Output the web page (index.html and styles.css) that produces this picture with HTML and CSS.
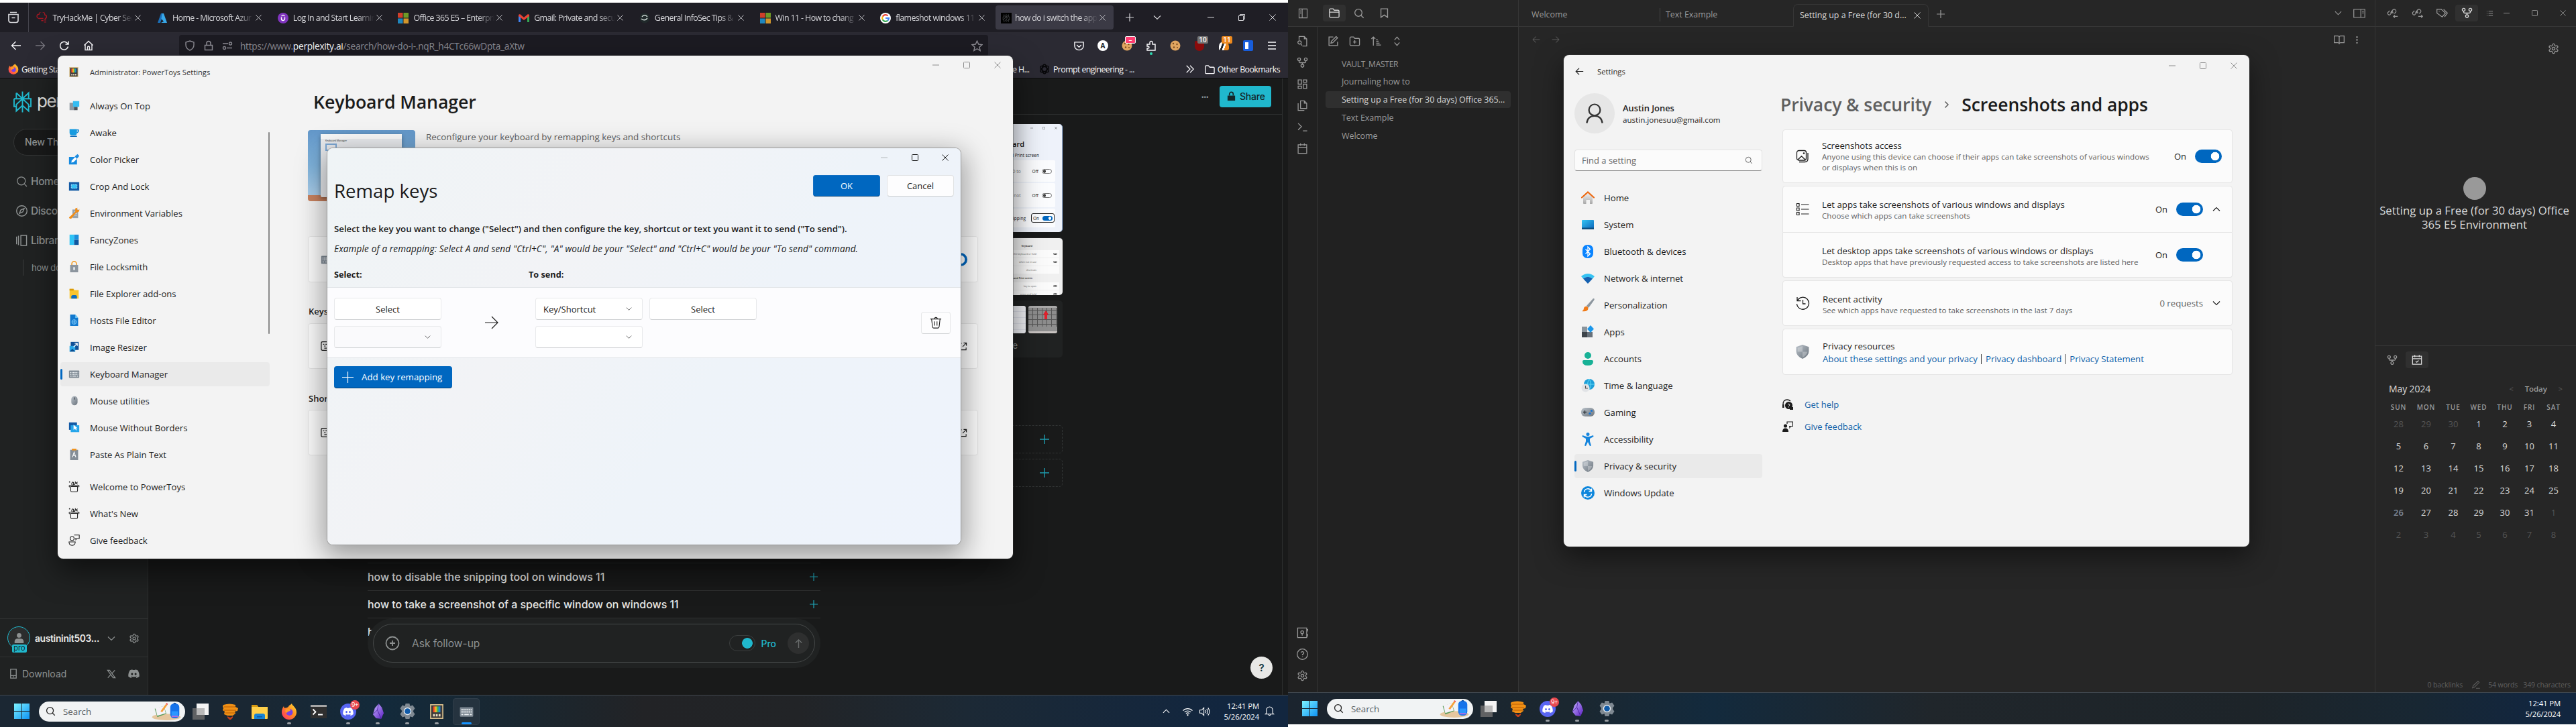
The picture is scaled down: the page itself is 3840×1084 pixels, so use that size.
FILE: index.html
```html
<!DOCTYPE html>
<html lang="en">
<head>
<meta charset="utf-8">
<title>Desktop</title>
<link rel="stylesheet" href="styles.css">
</head>
<body>
<svg class="defs" width="0" height="0" aria-hidden="true">
  <defs>
    <linearGradient id="g-win" x1="0" y1="0" x2="1" y2="1"><stop offset="0" stop-color="#7df3ff"/><stop offset="1" stop-color="#0f93f5"/></linearGradient>
    <linearGradient id="g-blue" x1="0" y1="0" x2="1" y2="1"><stop offset="0" stop-color="#33c5f5"/><stop offset="1" stop-color="#0a63b8"/></linearGradient>
    <linearGradient id="g-gray" x1="0" y1="0" x2="1" y2="1"><stop offset="0" stop-color="#b9c1c9"/><stop offset="1" stop-color="#6b747d"/></linearGradient>
    <linearGradient id="g-ff" x1="0" y1="1" x2="1" y2="0"><stop offset="0" stop-color="#ff2a6d"/><stop offset=".55" stop-color="#ff8a1f"/><stop offset="1" stop-color="#ffe43c"/></linearGradient>
    <linearGradient id="g-obs" x1="0" y1="0" x2="1" y2="1"><stop offset="0" stop-color="#c9b6ff"/><stop offset="1" stop-color="#5b1fc4"/></linearGradient>
    <linearGradient id="g-home" x1="0" y1="0" x2="0" y2="1"><stop offset="0" stop-color="#f0f0f0"/><stop offset="1" stop-color="#a9a9a9"/></linearGradient>
    <linearGradient id="g-rain" x1="0" y1="0" x2="1" y2="0"><stop offset=".1" stop-color="#e8412d"/><stop offset=".4" stop-color="#fbc423"/><stop offset=".6" stop-color="#3fb54a"/><stop offset=".9" stop-color="#1e7fe0"/></linearGradient>
  </defs>
  <symbol id="min" viewBox="0 0 10 10"><path d="M0 5h10" fill="none" stroke="currentColor"/></symbol>
  <symbol id="max" viewBox="0 0 10 10"><rect x=".5" y=".5" width="9" height="9" rx="1" fill="none" stroke="currentColor"/></symbol>
  <symbol id="restore" viewBox="0 0 10 10"><path d="M.5 2.5h7v7h-7zM2.5 2.5v-2h7v7h-2" fill="none" stroke="currentColor"/></symbol>
  <symbol id="x" viewBox="0 0 10 10"><path d="M.5.5l9 9M9.5.5l-9 9" fill="none" stroke="currentColor"/></symbol>
  <symbol id="plus" viewBox="0 0 10 10"><path d="M5 0v10M0 5h10" fill="none" stroke="currentColor"/></symbol>
  <symbol id="plusthin" viewBox="0 0 17 17"><path d="M8.500 0v17M0 8.500h17" fill="none" stroke="currentColor" stroke-width="1.200"/></symbol>
  <symbol id="down" viewBox="0 0 12 12"><path d="M1 3.500l5 5 5-5" fill="none" stroke="currentColor" stroke-width="1.200"/></symbol>
  <symbol id="up" viewBox="0 0 12 12"><path d="M1 8.500l5-5 5 5" fill="none" stroke="currentColor" stroke-width="1.200"/></symbol>
  <symbol id="left" viewBox="0 0 16 16"><path d="M15 8H1.500M7.500 2l-6 6 6 6" fill="none" stroke="currentColor" stroke-width="1.400"/></symbol>
  <symbol id="right" viewBox="0 0 16 16"><path d="M1 8h13.500M8.500 2l6 6-6 6" fill="none" stroke="currentColor" stroke-width="1.400"/></symbol>
  <symbol id="mapto" viewBox="0 0 20 20"><path d="M0 10h19M10 1l9 9-9 9" fill="none" stroke="currentColor" stroke-width="1.200"/></symbol>
  <symbol id="reload" viewBox="0 0 16 16"><path d="M13.500 9.500a6 6 0 1 1-1.500-5.500l1.500 1.500M14 1.500v4.500H9.500" fill="none" stroke="currentColor" stroke-width="1.500"/></symbol>
  <symbol id="house" viewBox="0 0 16 16"><path d="M1.500 7.500L8 1.500l6.500 6M3 6.500v8h10v-8M6.500 14.500v-4a1.500 1.500 0 0 1 3 0v4" fill="none" stroke="currentColor" stroke-width="1.400"/></symbol>
  <symbol id="fxview" viewBox="0 0 18 18"><path d="M4 1.500h10M2 4.500h14v9a3 3 0 0 1-3 3H5a3 3 0 0 1-3-3zM6.500 9.500h5" fill="none" stroke="currentColor" stroke-width="1.700"/></symbol>
  <symbol id="shieldo" viewBox="0 0 16 16"><path d="M8 1l6 2v4c0 4-2.500 6.500-6 8-3.500-1.500-6-4-6-8V3z" fill="none" stroke="currentColor" stroke-width="1.400"/></symbol>
  <symbol id="lock" viewBox="0 0 16 16"><path d="M2.500 7.500h11v7h-11zM5 7.500V4.500a3 3 0 0 1 6 0v3" fill="none" stroke="currentColor" stroke-width="1.500"/></symbol>
  <symbol id="lockf" viewBox="0 0 16 16"><path d="M2 7h12v8H2z" fill="currentColor"/><path d="M5 7V4.500a3 3 0 0 1 6 0V7" fill="none" stroke="currentColor" stroke-width="1.800"/></symbol>
  <symbol id="perm" viewBox="0 0 16 16"><path d="M1 5h8M7 11.500h8" stroke="currentColor" stroke-width="1.500"/><circle cx="12.500" cy="5" r="2" fill="none" stroke="currentColor" stroke-width="1.400"/><circle cx="3.500" cy="11.500" r="2" fill="none" stroke="currentColor" stroke-width="1.400"/></symbol>
  <symbol id="star" viewBox="0 0 16 16"><path d="M8 1l2.100 4.700 5 .5-3.800 3.400 1.100 5L8 12l-4.400 2.600 1.100-5L.9 6.200l5-.5z" fill="none" stroke="currentColor" stroke-width="1.300"/></symbol>
  <symbol id="pocket" viewBox="0 0 16 16"><path d="M1 2h14v6a7 6.500 0 0 1-14 0zM4.500 6.500L8 10l3.500-3.500" fill="none" stroke="currentColor" stroke-width="1.500"/></symbol>
  <symbol id="puzzle" viewBox="0 0 16 16"><path d="M2 6h4V3.500a2 2 0 0 1 4 0V6h4v9H2v-3h1.500a1.500 1.500 0 0 0 0-3H2z" fill="none" stroke="currentColor" stroke-width="1.400"/></symbol>
  <symbol id="cookie" viewBox="0 0 16 16"><circle cx="8" cy="8" r="7.500" fill="#e0a560"/><g fill="#7a4a1e"><circle cx="5" cy="5" r="1.200"/><circle cx="10.500" cy="6" r="1.200"/><circle cx="6" cy="10.500" r="1.200"/><circle cx="11" cy="11" r="1"/></g></symbol>
  <symbol id="menu" viewBox="0 0 16 16"><path d="M2 3h12M2 8h12M2 13h12" stroke="currentColor" stroke-width="1.600"/></symbol>
  <symbol id="fox" viewBox="0 0 24 24"><path d="M12 3c2-1 3-2 4-3 0 3 7 5 7 13a11 11 0 0 1-22 0c0-4 1-6 3-9l1 3c2-1 5 0 7-4z" fill="url(#g-ff)"/><circle cx="12.500" cy="13" r="5" fill="#7542e5"/><path d="M8 8c3-1 6 0 6 2s-5 1-5 4c-3-1-4-4-1-6z" fill="#ff9a26"/></symbol>
  <symbol id="folder" viewBox="0 0 16 16"><path d="M1 13.500V3q0-1 1-1h3.500L8 4.500h6q1 0 1 1v8q0 1-1 1H2q-1 0-1-1z" fill="none" stroke="currentColor" stroke-width="1.400"/></symbol>
  <symbol id="chev2" viewBox="0 0 16 16"><path d="M2 2l6 6-6 6M8 2l6 6-6 6" fill="none" stroke="currentColor" stroke-width="1.400"/></symbol>
  <symbol id="cloud" viewBox="0 0 16 16"><path d="M4 9a3 3 0 0 1 0-6 4 4 0 0 1 8 1 2.500 2.500 0 0 1 0 5M4 9h6M7 12h3M11 14h3M11 11h3" fill="none" stroke="#a31722" stroke-width="1.300"/></symbol>
  <symbol id="azure" viewBox="0 0 16 16"><path d="M6 1h4l-5 14H1z" fill="#1b6fb8"/><path d="M8 1h2l5 14H6l4-2-3.500-4z" fill="#38a9ea"/></symbol>
  <symbol id="udemy" viewBox="0 0 16 16"><circle cx="8" cy="8" r="8" fill="#8034be"/><path d="M5.500 6.500V9a2.500 2.500 0 0 0 5 0V6.500M5.500 5L8 3.500 10.500 5" fill="none" stroke="#fff" stroke-width="1.400"/></symbol>
  <symbol id="ms" viewBox="0 0 16 16"><path d="M0 0h7.500v7.500H0z" fill="#cf3f2b"/><path d="M8.500 0H16v7.500H8.500z" fill="#6f9a26"/><path d="M0 8.500h7.500V16H0z" fill="#1f86bd"/><path d="M8.500 8.500H16V16H8.500z" fill="#d1962c"/></symbol>
  <symbol id="gmail" viewBox="0 0 16 16"><path d="M0 4v10h3V6z" fill="#4285f4"/><path d="M16 4v10h-3V6z" fill="#34a853"/><path d="M0 3l2-1 6 5 6-5 2 1v2l-8 6-8-6z" fill="#ea4335"/></symbol>
  <symbol id="google" viewBox="0 0 16 16"><circle cx="8" cy="8" r="8" fill="#fff"/><g fill="none" stroke-width="2.200"><path d="M11.500 4.500A5 5 0 0 0 3.700 5.700" stroke="#ea4335"/><path d="M3.700 5.700a5 5 0 0 0 0 4.600" stroke="#fbbc05"/><path d="M3.700 10.300a5 5 0 0 0 7.600 1.400" stroke="#34a853"/><path d="M11.300 11.700A5 5 0 0 0 13 8H8" stroke="#4285f4"/></g></symbol>
  <symbol id="infosec" viewBox="0 0 16 16"><circle cx="8" cy="8" r="7.500" fill="#20292a"/><path d="M4 6c2-3 6-3 8 0M3 9c3 3 7 2 9-1" fill="none" stroke="#c9d4d0" stroke-width="1.500"/></symbol>
  <symbol id="plex" viewBox="0 0 28 32"><path d="M14 0v32M4.500 2L14 11l9.500-9v9M4.500 2v9M1 11h26v12h-4M1 11v12h4M14 11L4.500 20v10l9.500-8.500 9.500 8.500V20z" fill="none" stroke="currentColor" stroke-width="2"/></symbol>
  <symbol id="openai" viewBox="0 0 16 16"><g fill="none" stroke="#08080a" stroke-width="1.500"><ellipse cx="8" cy="8" rx="3.500" ry="7"/><ellipse cx="8" cy="8" rx="3.500" ry="7" transform="rotate(60 8 8)"/><ellipse cx="8" cy="8" rx="3.500" ry="7" transform="rotate(120 8 8)"/></g></symbol>
  <!-- line icons on a 24px grid -->
  <symbol id="search" viewBox="0 0 24 24"><g fill="none" stroke="currentColor" stroke-width="2"><circle cx="10.500" cy="10.500" r="8"/><path d="M22 22l-6-6"/></g></symbol>
  <symbol id="searchr" viewBox="0 0 24 24"><g fill="none" stroke="currentColor" stroke-width="1.800"><circle cx="11" cy="11" r="8.500"/><path d="M17.500 17.500l5 5"/></g></symbol>
  <symbol id="compass" viewBox="0 0 24 24"><g fill="none" stroke="currentColor" stroke-width="2"><circle cx="12" cy="12" r="11"/><path d="M17 7l-3 7-7 3 3-7z"/></g></symbol>
  <symbol id="library" viewBox="0 0 24 24"><path d="M1 4v16M5 2v20M10 1.500h12v21H10z" fill="none" stroke="currentColor" stroke-width="2"/></symbol>
  <symbol id="gear" viewBox="0 0 24 24"><g fill="none" stroke="currentColor" stroke-width="1.800"><path d="M12.220 2h-.44a2 2 0 0 0-2 2v.18a2 2 0 0 1-1 1.730l-.43.25a2 2 0 0 1-2 0l-.15-.08a2 2 0 0 0-2.730.730l-.22.38a2 2 0 0 0 .73 2.730l.15.1a2 2 0 0 1 1 1.720v.51a2 2 0 0 1-1 1.740l-.15.09a2 2 0 0 0-.73 2.730l.22.38a2 2 0 0 0 2.730.730l.15-.08a2 2 0 0 1 2 0l.43.25a2 2 0 0 1 1 1.730V20a2 2 0 0 0 2 2h.44a2 2 0 0 0 2-2v-.18a2 2 0 0 1 1-1.730l.43-.25a2 2 0 0 1 2 0l.15.08a2 2 0 0 0 2.730-.730l.22-.39a2 2 0 0 0-.73-2.730l-.15-.08a2 2 0 0 1-1-1.740v-.5a2 2 0 0 1 1-1.740l.15-.09a2 2 0 0 0 .73-2.730l-.22-.38a2 2 0 0 0-2.730-.730l-.15.08a2 2 0 0 1-2 0l-.43-.25a2 2 0 0 1-1-1.730V4a2 2 0 0 0-2-2z"/><circle cx="12" cy="12" r="3"/></g></symbol>
  <symbol id="phone" viewBox="0 0 12 16"><path d="M1.500 1h9v14h-9zM2 11h8M5 13h2" fill="none" stroke="currentColor" stroke-width="1.400"/></symbol>
  <symbol id="xlogo" viewBox="0 0 16 16"><path d="M1.500 1.500h3.500l9.500 13H11zM14 1.500L9 7M2 14.500L7 9" fill="none" stroke="currentColor" stroke-width="1.400"/></symbol>
  <symbol id="discord" viewBox="0 0 24 18"><path d="M20 1.500A20 20 0 0 0 15.200 0l-.7 1.300a18 18 0 0 0-5 0L8.800 0A20 20 0 0 0 4 1.500C1 6 0 10.500.5 15A20 20 0 0 0 6.500 18l1.300-2-2-1 .5-.4a14 14 0 0 0 11.400 0l.5.4-2 1 1.300 2a20 20 0 0 0 6-3c.6-5.200-.9-9.600-3.500-13.500zM8.300 12.200c-1.200 0-2.100-1.100-2.100-2.400s.9-2.400 2.100-2.400 2.100 1.100 2.100 2.400-.9 2.400-2.100 2.400zm7.400 0c-1.200 0-2.100-1.100-2.100-2.400s.9-2.400 2.100-2.400 2.100 1.100 2.100 2.400-.9 2.400-2.100 2.400z" fill="currentColor"/></symbol>
  <symbol id="circplus" viewBox="0 0 22 22"><g fill="none" stroke="currentColor" stroke-width="1.800"><circle cx="11" cy="11" r="9.500"/><path d="M11 7v8M7 11h8"/></g></symbol>
  <symbol id="arrowup" viewBox="0 0 16 16"><path d="M8 15V2M3 7l5-5 5 5" fill="none" stroke="currentColor" stroke-width="1.500"/></symbol>
  <symbol id="person" viewBox="0 0 20 22"><circle cx="10" cy="5.500" r="4.500" fill="currentColor"/><path d="M1 21v-3q0-6 6-6h6q6 0 6 6v3z" fill="currentColor"/></symbol>
  <!-- PowerToys -->
  <symbol id="pt" viewBox="0 0 20 20"><path d="M1 0h18v20H1z" fill="#d9c08e"/><path d="M2.500 1.500h15v17h-15z" fill="#3b3a39"/><path d="M5 3h10v8H5z" fill="url(#g-rain)"/><path d="M5 13.500h2.500v3H5zM8.800 13.500h2.500v3H8.800zM12.600 13.500h2.500v3h-2.500z" fill="#e9dcc0"/></symbol>
  <symbol id="aot" viewBox="0 0 20 20"><path d="M2 5h9v13H2z" fill="#8f98a1"/><path d="M10 12h6v6h-6z" fill="#4b5157"/><path d="M8 2h11v10H8z" fill="#35bdf3"/></symbol>
  <symbol id="cup" viewBox="0 0 20 20"><path d="M2 4h13v6q0 5-4 5H6q-4 0-4-5z" fill="#179be0"/><path d="M15 5.500h2.500q1.200 3-2.500 5" fill="none" stroke="#1286cf" stroke-width="1.700"/><path d="M3 16h12v1.500H3z" fill="#0b67b3"/></symbol>
  <symbol id="picker" viewBox="0 0 20 20"><path d="M1 6h14v13H1z" fill="#158ae0"/><path d="M5 16l1-4 6-6 3 3-6 6z" fill="#fff"/><path d="M11 5l5-4 3 3-4 5z" fill="#1d8be0"/></symbol>
  <symbol id="crop" viewBox="0 0 20 20"><path d="M1 3h18v15H1z" fill="#135aa5"/><path d="M5 7h10v7H5z" fill="#35c2f5" stroke="#bfe9ff" stroke-dasharray="2 1.500"/></symbol>
  <symbol id="wrench" viewBox="0 0 20 20"><path d="M7 4h10v15H7z" fill="#98a2ab"/><path d="M10 8h5M10 11h5M10 14h5" stroke="#dfe4e8"/><path d="M12 2l4-1-1 3 3 1 1-2q1 6-5 6l-9 11q-3 1-4-2L12 8z" fill="#f08c16"/></symbol>
  <symbol id="zones" viewBox="0 0 20 20"><path d="M2 1h8v18H2z" fill="#2fc4f6"/><path d="M10 1h8v9h-8z" fill="#1a8fdc"/><path d="M10 10h8v9h-8z" fill="#0e569f"/></symbol>
  <symbol id="locksmith" viewBox="0 0 20 20"><path d="M6 8V5a4 4 0 0 1 8 0v2" fill="none" stroke="#f39a1f" stroke-width="1.800"/><path d="M3 7h14v13H3z" fill="#8c959e"/><path d="M8.500 11h3v5h-3z" fill="#e9edf0"/></symbol>
  <symbol id="fexp" viewBox="0 0 20 20"><path d="M2 2h7l1.500 2H18v15H2z" fill="#fbc52d"/><path d="M2 2h7v3H2z" fill="#d99a0b"/><path d="M5 19v-3q0-3 3-3h4q3 0 3 3v3z" fill="#0f6cbd"/></symbol>
  <symbol id="hosts" viewBox="0 0 20 20"><path d="M3 0h9l5 6v14H3z" fill="#1279cf"/><path d="M12 0l5 6h-5z" fill="#6cc6f5"/><circle cx="10" cy="13" r="4" fill="none" stroke="#8fd6ff"/><path d="M6 13h8M10 9v8" stroke="#8fd6ff"/></symbol>
  <symbol id="resize" viewBox="0 0 20 20"><path d="M4 1h14v14H4z" fill="#0f4f96"/><path d="M2 8h10v10H2z" fill="#29a7e8"/><path d="M2 18l5-5 5 5z" fill="#0c4c8f"/><path d="M9 10l6-6M11 3.500h4.500V8" stroke="#fff" stroke-width="1.500" fill="none"/></symbol>
  <symbol id="kbd" viewBox="0 0 20 20"><rect x="1" y="4" width="18" height="13" rx="1" fill="#7e8993"/><path d="M3 7.500h14M3 10.500h14" stroke="#eef2f5" stroke-width="1.700" stroke-dasharray="1.800 .8"/><path d="M3 14h2.500M7 14h6M14.500 14H17" stroke="#eef2f5" stroke-width="1.500"/></symbol>
  <symbol id="mouse" viewBox="0 0 20 20"><rect x="5" y="2" width="11" height="16" rx="5.500" fill="url(#g-gray)"/><path d="M10.500 4v4" stroke="#444b52" stroke-width="1.500"/></symbol>
  <symbol id="mwb" viewBox="0 0 20 20"><path d="M1 1h14v13H1z" fill="#135aa5"/><path d="M4 6h15v12H4z" fill="#25a5ea"/><path d="M9 5v9l2.500-2 2 3 1-.8-1.500-3h3z" fill="#fff"/></symbol>
  <symbol id="paste" viewBox="0 0 20 20"><path d="M3 2h14v18H3z" fill="#858e97"/><path d="M6 0h8v3H6z" fill="#f0931e"/><path d="M7 15l3-9 3 9M8 12h4" fill="none" stroke="#fff" stroke-width="1.200"/></symbol>
  <symbol id="party" viewBox="0 0 20 20"><path d="M4 10v7q0 2 2 2h8q2 0 2-2v-7zM2 11q-2-3 1-3h14q3 0 1 3M8 8q-3-1-2-4t3-1v4q4-1 3-6M13 3l3 3M16 2l-3 3M2 1v2M1 2h2M18 8v2" fill="none" stroke="currentColor" stroke-width="1.200"/></symbol>
  <symbol id="feedback" viewBox="0 0 20 20"><circle cx="6.500" cy="7" r="3.500" fill="none" stroke="currentColor" stroke-width="1.200"/><path d="M1 13h11q0 6-5.500 6T1 13zM10 1h9v6h-4l-2 2V7h-1.500" fill="none" stroke="currentColor" stroke-width="1.200"/></symbol>
  <symbol id="keyo" viewBox="0 0 20 20"><rect x="1" y="3" width="18" height="14" rx="2" fill="none" stroke="currentColor" stroke-width="1.400"/><path d="M4 7h2M8 7h2M12 7h2M6 10h2M10 10h2M14 10h2M6 13.500h8" stroke="currentColor" stroke-width="1.500"/></symbol>
  <symbol id="ext" viewBox="0 0 14 14"><path d="M5 2H1.500v10.500H12V9M8 1.500h4.500V6M12.500 1.500l-6 6" fill="none" stroke="currentColor" stroke-width="1.200"/></symbol>
  <symbol id="trash" viewBox="0 0 20 20"><path d="M1 4h18M3 4l1.500 13q.2 2 2 2h7q1.800 0 2-2L17 4M7.500 4a2.500 2.500 0 0 1 5 0M8 8v7M12 8v7" fill="none" stroke="currentColor" stroke-width="1.200"/></symbol>
  <!-- taskbar -->
  <symbol id="winlogo" viewBox="0 0 24 24"><path d="M0 0h11.500v11.500H0zM12.500 0H24v11.500H12.500zM0 12.500h11.500V24H0zM12.500 12.500H24V24H12.500z" fill="url(#g-win)"/></symbol>
  <symbol id="art" viewBox="0 0 46 28"><ellipse cx="23" cy="23" rx="22" ry="5" fill="#e5c69e"/><path d="M5 10l14-4 4 12-14 5z" fill="#5a9c5a"/><path d="M6 9l13-3 3 11-13 4z" fill="#f5f2f7"/><path d="M14 14l8-11 2.500 1.500-8 11z" fill="#f6a13a"/><path d="M22 3l1-2 2.500 1.500-1 2z" fill="#ef5a5a"/><rect x="29" y="2" width="14" height="23" rx="6" fill="#1673ea"/><path d="M31 14h10v8H31z" fill="#2b97ff"/><path d="M31 22h10" stroke="#b46ae0" stroke-width="2"/><path d="M34 3q2-3 4 0" stroke="#0a4ea8" fill="none" stroke-width="1.500"/></symbol>
  <symbol id="taskview" viewBox="0 0 24 24"><path d="M6 0h18v17H6z" fill="#f4f4f4"/><path d="M0 7h18v17H0z" fill="#6c6c6c" opacity=".85"/><path d="M6 7h12v10H6z" fill="#b9b9b9"/></symbol>
  <symbol id="swirl" viewBox="0 0 24 24"><path d="M2 2q9-3 18 0v3l4 2-1 4-4 1 1 3-4 3H8l-5-2 1-4-3-2 1-3-1-3z" fill="#f09015"/><path d="M3 5h17M3 10h18M5 14h14" stroke="#b65a05" stroke-width="1.200"/><path d="M8 19l4 2 4-2v2l-4 4-4-4z" fill="#c7401a"/></symbol>
  <symbol id="explorer" viewBox="0 0 24 24"><path d="M0 2h8l2 3h14v17q0 1-1 1H1q-1 0-1-1z" fill="#ffd04a"/><path d="M0 2h8l2 3H0z" fill="#d79a12"/><path d="M4 23v-5q0-3 3-3h10q3 0 3 3v5z" fill="#1583d6"/><path d="M8 19h8v1.500H8z" fill="#0b5aa5"/></symbol>
  <symbol id="term" viewBox="0 0 24 20"><path d="M0 0h24v20H0z" fill="#2f2f2f"/><path d="M0 0h24v3H0z" fill="#a5a5a5"/><path d="M3.500 6.500l4 4-4 4M11 14.500h7" fill="none" stroke="#fff" stroke-width="1.800"/></symbol>
  <symbol id="obs" viewBox="0 0 18 24"><path d="M10 0L4 7 1 17l5 6 8 1 4-9-3-9z" fill="url(#g-obs)"/><path d="M10 0L8 10l6 14M8 10l-7 7" stroke="#3f1a94" stroke-width=".8" fill="none"/></symbol>
  <symbol id="cog" viewBox="0 0 24 24"><path d="M9 0h6l1 4 4-1.500 3.500 5L21 11v2l2.500 3.500-3.500 5L16 20l-1 4H9l-1-4-4 1.500-3.500-5L3 13v-2L.5 7.500 4 2.500 8 4z" fill="#7f8992"/><circle cx="12" cy="12" r="6" fill="#e6ebef"/><circle cx="12" cy="12" r="4.500" fill="#0f5aa8"/></symbol>
  <symbol id="wifi" viewBox="0 0 18 16"><g fill="none" stroke="currentColor" stroke-width="1.300"><path d="M1 6.500a11 11 0 0 1 16 0M3.500 9a8 8 0 0 1 11 0M6 11.500a4.500 4.500 0 0 1 6 0"/></g><circle cx="9" cy="14" r="1.300" fill="currentColor"/></symbol>
  <symbol id="vol" viewBox="0 0 18 16"><path d="M1 5.500h3l4-4v13l-4-4H1zM10.500 5.500q2 2.500 0 5M12.700 3.500q3.500 4.500 0 9M15 1.500q5 6.500 0 13" fill="none" stroke="currentColor" stroke-width="1.200"/></symbol>
  <symbol id="bell" viewBox="0 0 16 16"><path d="M3 11V6a5 5 0 0 1 10 0v5l1.500 1.500h-13zM6.500 13a1.500 1.500 0 0 0 3 0" fill="none" stroke="currentColor" stroke-width="1.200"/></symbol>
  <!-- Obsidian -->
  <symbol id="panel" viewBox="0 0 24 24"><path d="M3 2h18v20H3zM10 2v20M5.500 6H8M5.500 9H8M5.500 12H8" fill="none" stroke="currentColor" stroke-width="1.700"/></symbol>
  <symbol id="panelr" viewBox="0 0 24 24"><path d="M1 4h22v16H1zM15 4v16M17.500 8H21M17.500 11H21" fill="none" stroke="currentColor" stroke-width="1.600"/></symbol>
  <symbol id="ofolder" viewBox="0 0 24 24"><path d="M20 21a2 2 0 0 0 2-2V8a2 2 0 0 0-2-2h-8l-2.500-3H4a2 2 0 0 0-2 2v14a2 2 0 0 0 2 2zM2 10h20" fill="none" stroke="currentColor" stroke-width="1.900"/></symbol>
  <symbol id="bookmark" viewBox="0 0 24 24"><path d="M19 21l-7-5-7 5V3h14z" fill="none" stroke="currentColor" stroke-width="1.900"/></symbol>
  <symbol id="switcher" viewBox="0 0 24 24"><path d="M5 9V2h11l5 5v15h-9M16 2v5h5" fill="none" stroke="currentColor" stroke-width="1.800"/><circle cx="6" cy="14.500" r="3.500" fill="none" stroke="currentColor" stroke-width="1.800"/><path d="M8.500 17.500L11 21" stroke="currentColor" stroke-width="1.800"/></symbol>
  <symbol id="fork" viewBox="0 0 24 24"><g fill="none" stroke="currentColor" stroke-width="1.900"><circle cx="12" cy="18.500" r="3"/><circle cx="5" cy="5" r="3"/><circle cx="19" cy="5" r="3"/><path d="M19 8v2q0 2-2 2H7q-2 0-2-2V8M12 12v3"/></g></symbol>
  <symbol id="dash" viewBox="0 0 24 24"><path d="M3 3h7v9H3zM14 3h7v5h-7zM14 12h7v9h-7zM3 16h7v5H3z" fill="none" stroke="currentColor" stroke-width="1.800"/></symbol>
  <symbol id="files" viewBox="0 0 24 24"><path d="M8 2h8l5 5v11H8zM16 2v5h5M3 7v15h13" fill="none" stroke="currentColor" stroke-width="1.800"/></symbol>
  <symbol id="prompt" viewBox="0 0 24 24"><path d="M3 4l7 7-7 7M13 20h9" fill="none" stroke="currentColor" stroke-width="1.800"/></symbol>
  <symbol id="cal" viewBox="0 0 24 24"><path d="M3 4h18v18H3zM3 9.500h18M8 1v5M16 1v5" fill="none" stroke="currentColor" stroke-width="1.800"/></symbol>
  <symbol id="calcheck" viewBox="0 0 24 24"><path d="M2 4h20v18H2zM2 9.500h20M7 1v5M17 1v5M9 15.500l2.500 2 4-4" fill="none" stroke="currentColor" stroke-width="1.900"/></symbol>
  <symbol id="vault" viewBox="0 0 24 24"><path d="M2 2h19v20H2zM21 5h2.500v4M21 16h2.500v4M11.500 14v4" fill="none" stroke="currentColor" stroke-width="1.800"/><circle cx="11.500" cy="11" r="3" fill="none" stroke="currentColor" stroke-width="1.800"/></symbol>
  <symbol id="help" viewBox="0 0 24 24"><g fill="none" stroke="currentColor" stroke-width="1.800"><circle cx="12" cy="12" r="11"/><path d="M9 9q.5-2.500 3-2.500t3 2.500q0 2-3 3.500v1.500M12 16.500v1.500"/></g></symbol>
  <symbol id="edit" viewBox="0 0 24 24"><path d="M12 3H3v18h18v-8M18 2l3 3-10 10-4 1 1-4z" fill="none" stroke="currentColor" stroke-width="1.900"/></symbol>
  <symbol id="newfolder" viewBox="0 0 24 24"><path d="M20 21a2 2 0 0 0 2-2V8a2 2 0 0 0-2-2h-8l-2.500-3H4a2 2 0 0 0-2 2v14a2 2 0 0 0 2 2zM12 10v7M8.500 13.500h7" fill="none" stroke="currentColor" stroke-width="1.900"/></symbol>
  <symbol id="sort" viewBox="0 0 24 24"><path d="M6 21V3M2 7l4-4 4 4M12 8h3M12 12h5M12 16h7M12 20h10" fill="none" stroke="currentColor" stroke-width="1.900"/></symbol>
  <symbol id="updown" viewBox="0 0 24 24"><path d="M6 9l6-7 6 7M6 15l6 7 6-7" fill="none" stroke="currentColor" stroke-width="1.900"/></symbol>
  <symbol id="book" viewBox="0 0 24 24"><path d="M12 6q-1-2-3-2H1v15h8q2 0 3 2 1-2 3-2h8V4h-8q-2 0-3 2v15" fill="none" stroke="currentColor" stroke-width="1.900"/></symbol>
  <symbol id="dots" viewBox="0 0 24 24"><g fill="currentColor"><circle cx="12" cy="4" r="2.200"/><circle cx="12" cy="12" r="2.200"/><circle cx="12" cy="20" r="2.200"/></g></symbol>
  <symbol id="linkin" viewBox="0 0 24 24"><path d="M8 11l5-6a4 4 0 0 1 6 5l-3 3M12 9l-6 7a4 4 0 0 1-4-5l4-4M9 8q4 0 4 5M23 19h-9M17 16l-3 3 3 3" fill="none" stroke="currentColor" stroke-width="1.700"/></symbol>
  <symbol id="linkout" viewBox="0 0 24 24"><path d="M8 11l5-6a4 4 0 0 1 6 5l-3 3M12 9l-6 7a4 4 0 0 1-4-5l4-4M9 8q4 0 4 5M14 19h9M20 16l3 3-3 3" fill="none" stroke="currentColor" stroke-width="1.700"/></symbol>
  <symbol id="tags" viewBox="0 0 24 24"><path d="M1 4h9l9 8-7 8L1 12zM15 4l8 8-6 8M5 8h1.500" fill="none" stroke="currentColor" stroke-width="1.800"/></symbol>
  <symbol id="list" viewBox="0 0 24 24"><path d="M8 5h14M8 12h14M8 19h14M2 5h2M2 12h2M2 19h2" stroke="currentColor" stroke-width="1.900"/></symbol>
  <symbol id="pencil" viewBox="0 0 24 24"><path d="M3 20l2-6L17 3l3 3L8 18zM12 21h10" fill="none" stroke="currentColor" stroke-width="1.800"/></symbol>
  <!-- Settings -->
  <symbol id="s-home" viewBox="0 0 20 20"><path d="M3 8l7-5 7 5v10q0 1-1 1h-3v-6H7.500v6H4q-1 0-1-1z" fill="url(#g-home)"/><path d="M1 9.500l9-8 9 8" fill="none" stroke="#ec6a13" stroke-width="2.200" stroke-linecap="round"/></symbol>
  <symbol id="s-sys" viewBox="0 0 20 20"><rect x="1" y="3" width="18" height="14" rx="1" fill="url(#g-blue)"/><path d="M1 14.500h18V17H1z" fill="#0c4f80"/></symbol>
  <symbol id="s-bt" viewBox="0 0 20 20"><rect x="2" y="0" width="16" height="20" rx="7" fill="#0a84ff"/><path d="M6.500 6.500l7 7L10 17V3l3.500 3.500-7 7" fill="none" stroke="#fff" stroke-width="1.300"/></symbol>
  <symbol id="s-net" viewBox="0 0 20 20"><path d="M0 7Q10-1 20 7l-3 3.500Q10 5 3 10.500z" fill="#35c3f3"/><path d="M3 10.500q7-5.500 14 0L10 18z" fill="#1460b0"/></symbol>
  <symbol id="s-brush" viewBox="0 0 20 20"><path d="M8 11L18 0q3 0 1 3L11 14z" fill="#8d979f"/><path d="M1 19q3-1 3-5 2-3 5-2 3 3 0 6-3 2-8 1z" fill="#f07a17"/></symbol>
  <symbol id="s-apps" viewBox="0 0 20 20"><path d="M1 2h8v8H1z" fill="#8b949c"/><path d="M1 10h8v8H1z" fill="#3d4349"/><path d="M9 10h8v8H9z" fill="#68717a"/><path d="M14 0l5 5.500-5 5.500-5-5.500z" fill="#1b97ea"/></symbol>
  <symbol id="s-acc" viewBox="0 0 20 20"><circle cx="10" cy="5" r="5" fill="#18b196"/><path d="M2 14q0-2 2-2h12q2 0 2 2 0 6-8 6t-8-6z" fill="#18b196"/></symbol>
  <symbol id="s-time" viewBox="0 0 20 20"><circle cx="12" cy="8" r="8" fill="#1e9fd8"/><path d="M4 8h16M12 0q-5 8 0 16 5-8 0-16" fill="none" stroke="#63d8f5"/><circle cx="6.500" cy="13.500" r="6" fill="#e1e3e6"/><path d="M6.500 10v4H10" fill="none" stroke="#555" stroke-width="1.200"/></symbol>
  <symbol id="s-game" viewBox="0 0 20 20"><rect x="0" y="3" width="20" height="13" rx="6" fill="url(#g-gray)"/><path d="M3 9.500h5M5.500 7v5" stroke="#32383e" stroke-width="1.300"/><circle cx="15.500" cy="7.500" r="1.600" fill="#1474d4"/><circle cx="13" cy="11.500" r="1.600" fill="#1474d4"/></symbol>
  <symbol id="s-access" viewBox="0 0 20 20"><circle cx="10" cy="2.500" r="2.500" fill="#1585dd"/><path d="M2 4l6 2h4l6-2 .5 2L13 9v4l2 6.500-2 .5-3-6-3 6-2-.5L7 13V9L1.500 6z" fill="#1585dd"/></symbol>
  <symbol id="s-priv" viewBox="0 0 20 20"><path d="M10 0l9 3v6q0 7-9 11Q1 16 1 9V3z" fill="url(#g-gray)"/><path d="M10 2v8H3V4.500zM10 10h7q-1 5-7 8z" fill="#fff" opacity=".28"/></symbol>
  <symbol id="s-upd" viewBox="0 0 20 20"><circle cx="10" cy="10" r="10" fill="#0d86dc"/><path d="M4.500 9A5.500 5.500 0 0 1 15 7M15.500 3.500V7.500h-4M15.500 11A5.500 5.500 0 0 1 5 13M4.500 16.500v-4h4" fill="none" stroke="#fff" stroke-width="1.500"/></symbol>
  <symbol id="user" viewBox="0 0 30 32"><g fill="none" stroke="#333" stroke-width="2.400"><circle cx="15" cy="10" r="9"/><path d="M2.500 31Q4 19.500 15 19.500T27.500 31"/></g></symbol>
  <symbol id="shots" viewBox="0 0 20 20"><rect x="1.500" y="1.500" width="14" height="14.500" rx="3" fill="none" stroke="currentColor" stroke-width="1.300"/><path d="M18 5v9q0 4.500-4.500 4.500H5M3 15l5.500-5 5.500 5" fill="none" stroke="currentColor" stroke-width="1.300"/><circle cx="12" cy="5.500" r="1.300" fill="currentColor"/></symbol>
  <symbol id="applist" viewBox="0 0 20 20"><path d="M1.500 1.500h3.500v4H1.500zM1.500 8h3.500v4H1.500zM1.500 14.500h3.500v4H1.500zM8 3h11.500M8 10h11.500M8 17h11.500" fill="none" stroke="currentColor" stroke-width="1.200"/></symbol>
  <symbol id="history" viewBox="0 0 20 20"><path d="M1.500 1v5.500H7M2 6a9 9 0 1 1-1 5M10 5v6h4" fill="none" stroke="currentColor" stroke-width="1.300"/></symbol>
  <symbol id="gethelp" viewBox="0 0 16 16"><path d="M1 12V8Q1 1 7 1q3 0 5 2" fill="none" stroke="currentColor" stroke-width="1.300"/><path d="M0 8h2.500v5H0z" fill="currentColor"/><circle cx="9.500" cy="9.500" r="5.500" fill="currentColor"/><path d="M11 12h5v4h-5z" fill="currentColor"/><path d="M8 8.500q1.500-2.500 3 0 0 1-1.500 2M9.500 11.500v1" stroke="#fff" fill="none"/></symbol>
  <symbol id="givefb" viewBox="0 0 16 16"><circle cx="4.500" cy="7" r="2.600" fill="currentColor"/><path d="M0 16q0-5.500 4.500-5.500T9 16z" fill="currentColor"/><path d="M7 4V1h8.500v6.500h-3L11 9.500V7.500h-1" fill="none" stroke="currentColor" stroke-width="1.200"/></symbol>
</svg>

<div class="desktop">

<!-- ===== left monitor ===== -->
<section class="monitor left">
  <div class="fx-tabs">
    <span class="fx-view"><svg width="18" height="18"><use href="#fxview"/></svg></span>
    <div class="fx-tab"><svg width="17" height="17"><use href="#cloud"/></svg><span>TryHackMe | Cyber Secu</span><svg width="9" height="9"><use href="#x"/></svg></div>
    <div class="fx-tab"><svg width="16" height="16"><use href="#azure"/></svg><span>Home - Microsoft Azur</span><svg width="9" height="9"><use href="#x"/></svg></div>
    <div class="fx-tab"><svg width="16" height="16"><use href="#udemy"/></svg><span>Log In and Start Learnin</span><svg width="9" height="9"><use href="#x"/></svg></div>
    <div class="fx-tab"><svg width="16" height="16"><use href="#ms"/></svg><span>Office 365 E5 – Enterpri</span><svg width="9" height="9"><use href="#x"/></svg></div>
    <div class="fx-tab"><svg width="16" height="16"><use href="#gmail"/></svg><span>Gmail: Private and secu</span><svg width="9" height="9"><use href="#x"/></svg></div>
    <div class="fx-tab"><svg width="16" height="16"><use href="#infosec"/></svg><span>General InfoSec Tips &amp;</span><svg width="9" height="9"><use href="#x"/></svg></div>
    <div class="fx-tab"><svg width="16" height="16"><use href="#ms"/></svg><span>Win 11 - How to chang</span><svg width="9" height="9"><use href="#x"/></svg></div>
    <div class="fx-tab"><svg width="16" height="16"><use href="#google"/></svg><span>flameshot windows 11 -</span><svg width="9" height="9"><use href="#x"/></svg></div>
    <div class="fx-tab active"><svg class="plexfav" width="16" height="16"><use href="#plex"/></svg><span>how do i switch the app</span><svg width="9" height="9"><use href="#x"/></svg></div>
    <span class="c42"><svg width="12" height="12"><use href="#plus"/></svg></span>
    <span class="c42"><svg width="12" height="12"><use href="#down"/></svg></span>
    <span class="fx-win"><i><svg width="10" height="10"><use href="#min"/></svg></i><i><svg width="10" height="10"><use href="#restore"/></svg></i><i><svg width="10" height="10"><use href="#x"/></svg></i></span>
  </div>
  <div class="fx-nav">
    <i class="c36"><svg width="16" height="16"><use href="#left"/></svg></i>
    <i class="c36 dim"><svg width="16" height="16"><use href="#right"/></svg></i>
    <i class="c36"><svg width="16" height="16"><use href="#reload"/></svg></i>
    <i class="c36"><svg width="16" height="16"><use href="#house"/></svg></i>
    <div class="fx-url">
      <svg width="16" height="16"><use href="#shieldo"/></svg><svg width="16" height="16"><use href="#lock"/></svg><svg width="16" height="16"><use href="#perm"/></svg>
      <span class="addr">https://www.<b>perplexity.ai</b>/search/how-do-i-.nqR_h4CTc66wDpta_aXtw</span>
      <svg width="17" height="17"><use href="#star"/></svg>
    </div>
    <i class="c36 first"><svg width="15" height="15"><use href="#pocket"/></svg></i>
    <i class="c36"><em class="ava">A</em></i>
    <i class="c36"><svg width="16" height="16"><use href="#cookie"/></svg><em class="bdg pink">–</em></i>
    <i class="c36"><svg width="16" height="16"><use href="#puzzle"/></svg><em class="gdot"></em></i>
    <i class="c36"><svg width="16" height="16"><use href="#cookie"/></svg></i>
    <i class="c36"><em class="ub"></em><em class="bdg gray">10</em></i>
    <i class="c36"><em class="badger"></em><em class="bdg amber">11</em></i>
    <i class="c36"><em class="bw"></em></i>
    <i class="c36"><svg width="16" height="16"><use href="#menu"/></svg></i>
  </div>
  <div class="fx-marks">
    <svg width="16" height="16"><use href="#fox"/></svg><span class="gs">Getting Started</span>
    <span class="mk1">e H...</span>
    <svg class="mki" width="16" height="16"><use href="#openai"/></svg><span>Prompt engineering - ...</span>
    <svg class="mkc" width="14" height="14"><use href="#chev2"/></svg><svg class="mkf" width="15" height="15"><use href="#folder"/></svg><span class="ob">Other Bookmarks</span>
  </div>

  <div class="page">
    <aside class="px-side">
      <div class="px-logo"><svg width="27" height="32"><use href="#plex"/></svg><span>perplexity</span></div>
      <div class="px-new">New Thread</div>
      <div class="px-item"><svg width="17" height="17"><use href="#searchr"/></svg><span>Home</span></div>
      <div class="px-item"><svg width="17" height="17"><use href="#compass"/></svg><span>Discover</span></div>
      <div class="px-item"><svg width="17" height="17"><use href="#library"/></svg><span>Library</span></div>
      <div class="px-thread">how do i switch</div>
      <div class="px-user">
        <span class="px-ava"><svg width="15" height="17"><use href="#person"/></svg><em>pro</em></span>
        <b>austininit503...</b><svg width="12" height="12"><use href="#down"/></svg><svg width="16" height="16"><use href="#gear"/></svg>
      </div>
      <div class="px-dl"><svg width="12" height="15"><use href="#phone"/></svg><span>Download</span><svg width="14" height="14"><use href="#xlogo"/></svg><svg width="17" height="13"><use href="#discord"/></svg></div>
    </aside>
    <main class="px-main">
      <header class="px-head"><span>•••</span><b><svg width="15" height="15"><use href="#lockf"/></svg>Share</b></header>
      <div class="media">
        <div class="shot one">
          <div class="wb"><svg width="4" height="4"><use href="#min"/></svg><svg width="4" height="4"><use href="#max"/></svg><svg width="4" height="4"><use href="#x"/></svg></div>
          <h6>Keyboard</h6><p class="cap">and Print screen</p>
          <div class="r"><span>O to</span><b>Off</b><u></u></div>
          <div class="r tall"><span>en not</span><b>Off</b><u></u></div>
          <div class="r last"><span class="dk">Snipping</span><b class="f">On<u class="on"></u></b></div>
        </div>
        <div class="shot two">
          <div class="l"><b>Keyboard</b></div><div class="l w">the keyboard or hold<u></u></div><div class="l w">when not in use<u></u></div><div class="l w">shortcuts</div><div class="l"><b>keys and Print screen</b></div><div class="l w">key to open<u></u></div><div class="l w">press and hold<u></u></div>
        </div>
        <div class="more"><div class="mthumbs"><span class="t1"></span><span class="t2"><svg width="8" height="13" viewBox="0 0 8 13"><path d="M4 0l4 6H6v7H2V6H0z" fill="#e2202c"/></svg></span></div><p>View More</p></div>
        <div class="dash"><svg width="14" height="14"><use href="#plus"/></svg></div>
        <div class="dash"><svg width="14" height="14"><use href="#plus"/></svg></div>
      </div>
      <div class="related">
        <div>how to disable the snipping tool on windows 11<svg width="12" height="12"><use href="#plus"/></svg></div>
        <div>how to take a screenshot of a specific window on windows 11<svg width="12" height="12"><use href="#plus"/></svg></div>
        <div>how to use</div>
      </div>
      <div class="ask"><div class="ask-in"><svg width="22" height="22"><use href="#circplus"/></svg><span>Ask follow-up</span><i class="tg"></i><b>Pro</b><i class="send"><svg width="15" height="15"><use href="#arrowup"/></svg></i></div></div>
      <div class="qm">?</div>
    </main>
  </div>

  <div class="taskbar tb-left">
    <i class="start"><svg width="23" height="23"><use href="#winlogo"/></svg></i>
    <div class="tb-search"><svg width="15" height="15"><use href="#search"/></svg><span>Search</span><svg width="46" height="27"><use href="#art"/></svg></div>
    <i class="app"><svg width="24" height="24"><use href="#taskview"/></svg></i>
    <i class="app"><svg width="24" height="24"><use href="#swirl"/></svg></i>
    <i class="app"><svg width="24" height="24"><use href="#explorer"/></svg></i>
    <i class="app run"><svg width="24" height="24"><use href="#fox"/></svg></i>
    <i class="app"><svg width="24" height="20"><use href="#term"/></svg></i>
    <i class="app run"><em class="dc"><svg width="16" height="12"><use href="#discord"/></svg></em><em class="nine">9+</em></i>
    <i class="app run"><svg width="17" height="23"><use href="#obs"/></svg></i>
    <i class="app run"><svg width="23" height="23"><use href="#cog"/></svg></i>
    <i class="app run"><svg width="22" height="22"><use href="#pt"/></svg></i>
    <i class="app run cur"><svg width="23" height="22"><use href="#kbd"/></svg></i>
    <div class="tray"><svg width="11" height="11"><use href="#up"/></svg><svg width="17" height="14"><use href="#wifi"/></svg><svg width="17" height="14"><use href="#vol"/></svg><div class="clock"><span>12:41 PM</span><span>5/26/2024</span></div><svg width="15" height="15"><use href="#bell"/></svg></div>
  </div>
</section>

<!-- PowerToys settings -->
<section class="window pt-win">
  <div class="pt-title"><svg width="16" height="15"><use href="#pt"/></svg><span>Administrator: PowerToys Settings</span>
    <div class="wbtn"><i><svg width="10" height="10"><use href="#min"/></svg></i><i><svg width="10" height="10"><use href="#max"/></svg></i><i><svg width="10" height="10"><use href="#x"/></svg></i></div></div>
  <div class="pt-body">
    <nav class="pt-nav">
      <a><svg width="17" height="17"><use href="#aot"/></svg>Always On Top</a>
      <a><svg width="17" height="17"><use href="#cup"/></svg>Awake</a>
      <a><svg width="17" height="17"><use href="#picker"/></svg>Color Picker</a>
      <a><svg width="17" height="17"><use href="#crop"/></svg>Crop And Lock</a>
      <a><svg width="17" height="17"><use href="#wrench"/></svg>Environment Variables</a>
      <a><svg width="17" height="17"><use href="#zones"/></svg>FancyZones</a>
      <a><svg width="17" height="17"><use href="#locksmith"/></svg>File Locksmith</a>
      <a><svg width="17" height="17"><use href="#fexp"/></svg>File Explorer add-ons</a>
      <a><svg width="17" height="17"><use href="#hosts"/></svg>Hosts File Editor</a>
      <a><svg width="17" height="17"><use href="#resize"/></svg>Image Resizer</a>
      <a class="sel"><svg width="17" height="17"><use href="#kbd"/></svg>Keyboard Manager</a>
      <a><svg width="17" height="17"><use href="#mouse"/></svg>Mouse utilities</a>
      <a><svg width="17" height="17"><use href="#mwb"/></svg>Mouse Without Borders</a>
      <a class="gapb"><svg width="17" height="17"><use href="#paste"/></svg>Paste As Plain Text</a>
      <a><svg width="17" height="17"><use href="#party"/></svg>Welcome to PowerToys</a>
      <a><svg width="17" height="17"><use href="#party"/></svg>What's New</a>
      <a><svg width="17" height="17"><use href="#feedback"/></svg>Give feedback</a>
      <em class="sbar"></em>
    </nav>
    <div class="pt-main">
      <h1>Keyboard Manager</h1>
      <div class="pt-banner"><div class="pic"><div class="mini"><span></span><b>Keyboard Manager</b><i></i></div></div><p>Reconfigure your keyboard by remapping keys and shortcuts</p></div>
      <div class="pt-card c1"><svg width="18" height="18"><use href="#kbd"/></svg><em class="sw on"></em></div>
      <h2>Keys</h2>
      <div class="pt-card"><svg width="18" height="18"><use href="#keyo"/></svg><svg width="13" height="13"><use href="#ext"/></svg></div>
      <h2 class="h2b">Shortcuts</h2>
      <div class="pt-card"><svg width="18" height="18"><use href="#keyo"/></svg><svg width="13" height="13"><use href="#ext"/></svg></div>
    </div>
  </div>
</section>

<!-- Remap keys dialog -->
<section class="window dlg">
  <div class="wbtn"><i class="dis"><svg width="10" height="10"><use href="#min"/></svg></i><i><svg width="10" height="10"><use href="#max"/></svg></i><i><svg width="10" height="10"><use href="#x"/></svg></i></div>
  <div class="dlg-head"><h1>Remap keys</h1><button class="btn pri">OK</button><button class="btn">Cancel</button></div>
  <p class="lead"><span>Select the key you want to change ("Select") and then configure the key, shortcut or text you want it to send ("To send").</span></p>
  <p class="eg"><span>Example of a remapping: Select A and send "Ctrl+C", "A" would be your "Select" and "Ctrl+C" would be your "To send" command.</span></p>
  <div class="cols"><b>Select:</b><b>To send:</b></div>
  <div class="maprow">
    <div class="stack"><button class="fld mid">Select</button><button class="fld soft"><svg width="9" height="9"><use href="#down"/></svg></button></div>
    <svg class="arr" width="20" height="20"><use href="#mapto"/></svg>
    <div class="stack"><button class="fld">Key/Shortcut<svg width="9" height="9"><use href="#down"/></svg></button><button class="fld"><svg width="9" height="9"><use href="#down"/></svg></button></div>
    <div class="stack last"><button class="fld mid">Select</button></div>
    <button class="del"><svg width="18" height="20"><use href="#trash"/></svg></button>
  </div>
  <button class="add"><svg width="17" height="17"><use href="#plusthin"/></svg>Add key remapping</button>
</section>

<!-- ===== right monitor ===== -->
<section class="monitor right">
  <div class="obs">
    <div class="ribbon">
      <i><svg width="19" height="16"><use href="#panel"/></svg></i>
      <div class="rib-in">
      <i><svg width="17" height="17"><use href="#switcher"/></svg></i><i><svg width="17" height="17"><use href="#fork"/></svg></i><i><svg width="17" height="17"><use href="#dash"/></svg></i><i><svg width="17" height="17"><use href="#files"/></svg></i><i><svg width="17" height="17"><use href="#prompt"/></svg></i><i><svg width="17" height="17"><use href="#cal"/></svg></i>
      <i class="push"><svg width="17" height="17"><use href="#vault"/></svg></i><i><svg width="17" height="17"><use href="#help"/></svg></i><i><svg width="17" height="17"><use href="#gear"/></svg></i>
      </div>
    </div>
    <div class="o-side">
      <div class="o-tabs"><i class="on"><svg width="18" height="17"><use href="#ofolder"/></svg></i><i><svg width="16" height="16"><use href="#search"/></svg></i><i><svg width="17" height="17"><use href="#bookmark"/></svg></i></div>
      <div class="o-body">
        <div class="o-tools"><svg width="17" height="17"><use href="#edit"/></svg><svg width="17" height="17"><use href="#newfolder"/></svg><svg width="17" height="17"><use href="#sort"/></svg><svg width="15" height="15"><use href="#updown"/></svg></div>
        <b>VAULT_MASTER</b>
        <a>Journaling how to</a><a class="on">Setting up a Free (for 30 days) Office 365...</a><a>Text Example</a><a>Welcome</a>
      </div>
    </div>
    <div class="o-main">
      <div class="o-head"><span class="t">Welcome</span><span class="t sep">Text Example</span><span class="t on">Setting up a Free (for 30 d...<svg width="10" height="10"><use href="#x"/></svg></span><svg class="pl" width="12" height="12"><use href="#plus"/></svg>
        <svg class="hd" width="11" height="11"><use href="#down"/></svg><svg width="18" height="18"><use href="#panelr"/></svg></div>
      <div class="o-nav"><svg width="12" height="12"><use href="#left"/></svg><svg width="12" height="12"><use href="#right"/></svg><svg class="bk" width="16" height="16"><use href="#book"/></svg><svg width="13" height="13"><use href="#dots"/></svg></div>
    </div>
    <div class="o-right">
      <div class="or-head"><i><svg width="17" height="17"><use href="#linkin"/></svg></i><i><svg width="17" height="17"><use href="#linkout"/></svg></i><i><svg width="17" height="17"><use href="#tags"/></svg></i><i class="on"><svg width="17" height="17"><use href="#fork"/></svg></i><i class="li"><svg width="11" height="14"><use href="#list"/></svg></i><i class="wn"><svg width="9" height="9"><use href="#min"/></svg></i><i class="wn"><svg width="9" height="9"><use href="#max"/></svg></i><i class="wn"><svg width="9" height="9"><use href="#x"/></svg></i></div>
      <div class="graph"><svg class="gg" width="17" height="17"><use href="#gear"/></svg><em></em><p>Setting up a Free (for 30 days) Office<br>365 E5 Environment</p></div>
      <div class="or-tabs"><i><svg width="16" height="16"><use href="#fork"/></svg></i><i class="on"><svg width="16" height="17"><use href="#calcheck"/></svg></i></div>
      <div class="month"><b>May 2024</b><i>&lt;</i><span>Today</span><i>&gt;</i></div>
      <div class="calgrid wk"><b>SUN</b><b>MON</b><b>TUE</b><b>WED</b><b>THU</b><b>FRI</b><b>SAT</b></div>
      <div class="calgrid"><i>28</i><i>29</i><i>30</i><span>1</span><span>2</span><span>3</span><span>4</span><span>5</span><span>6</span><span>7</span><span>8</span><span>9</span><span>10</span><span>11</span><span>12</span><span>13</span><span>14</span><span>15</span><span>16</span><span>17</span><span>18</span><span>19</span><span>20</span><span>21</span><span>22</span><span>23</span><span>24</span><span>25</span><span class="today">26</span><span>27</span><span>28</span><span>29</span><span>30</span><span>31</span><i>1</i><i>2</i><i>3</i><i>4</i><i>5</i><i>6</i><i>7</i><i>8</i></div>
      <div class="status"><span>0 backlinks</span><svg width="14" height="14"><use href="#pencil"/></svg><span>54 words</span><span>349 characters</span></div>
    </div>
  </div>
  <div class="taskbar tb-right">
    <i class="start"><svg width="23" height="23"><use href="#winlogo"/></svg></i>
    <div class="tb-search"><svg width="15" height="15"><use href="#search"/></svg><span>Search</span><svg width="46" height="27"><use href="#art"/></svg></div>
    <i class="app"><svg width="24" height="24"><use href="#taskview"/></svg></i>
    <i class="app"><svg width="24" height="24"><use href="#swirl"/></svg></i>
    <i class="app run"><em class="dc"><svg width="16" height="12"><use href="#discord"/></svg></em><em class="nine">9+</em></i>
    <i class="app run"><svg width="17" height="23"><use href="#obs"/></svg></i>
    <i class="app run"><svg width="23" height="23"><use href="#cog"/></svg></i>
    <div class="tray"><div class="clock"><span>12:41 PM</span><span>5/26/2024</span></div></div>
  </div>
</section>

<!-- Windows Settings -->
<section class="window st-win">
  <div class="st-title"><svg width="13" height="13"><use href="#left"/></svg><span>Settings</span>
    <div class="wbtn"><i><svg width="10" height="10"><use href="#min"/></svg></i><i><svg width="10" height="10"><use href="#max"/></svg></i><i><svg width="10" height="10"><use href="#x"/></svg></i></div></div>
  <div class="st-body">
    <div class="st-left">
      <div class="st-user"><em><svg width="28" height="31"><use href="#user"/></svg></em><div><b>Austin Jones</b><span>austin.jonesuu@gmail.com</span></div></div>
      <div class="st-search"><span>Find a setting</span><svg width="12" height="12"><use href="#search"/></svg></div>
      <nav>
        <a><svg width="20" height="20"><use href="#s-home"/></svg>Home</a>
        <a><svg width="20" height="20"><use href="#s-sys"/></svg>System</a>
        <a><svg width="20" height="20"><use href="#s-bt"/></svg>Bluetooth &amp; devices</a>
        <a><svg width="20" height="20"><use href="#s-net"/></svg>Network &amp; internet</a>
        <a><svg width="20" height="20"><use href="#s-brush"/></svg>Personalization</a>
        <a><svg width="20" height="20"><use href="#s-apps"/></svg>Apps</a>
        <a><svg width="20" height="20"><use href="#s-acc"/></svg>Accounts</a>
        <a><svg width="20" height="20"><use href="#s-time"/></svg>Time &amp; language</a>
        <a><svg width="20" height="20"><use href="#s-game"/></svg>Gaming</a>
        <a><svg width="20" height="20"><use href="#s-access"/></svg>Accessibility</a>
        <a class="sel"><svg width="20" height="18"><use href="#s-priv"/></svg>Privacy &amp; security</a>
        <a><svg width="20" height="20"><use href="#s-upd"/></svg>Windows Update</a>
      </nav>
    </div>
    <div class="st-main">
      <h1><span>Privacy &amp; security</span><svg width="12" height="12" viewBox="0 0 12 12"><path d="M3.500 1.500L8 6l-4.500 4.500" fill="none" stroke="#5f5f5f" stroke-width="1.500"/></svg><b>Screenshots and apps</b></h1>
      <div class="st-card a"><svg width="20" height="20"><use href="#shots"/></svg><div class="tx"><b>Screenshots access</b><span>Anyone using this device can choose if their apps can take screenshots of various windows<br>or displays when this is on</span></div><span class="on">On</span><em class="sw on"></em></div>
      <div class="st-card b"><svg width="20" height="20"><use href="#applist"/></svg><div class="tx"><b>Let apps take screenshots of various windows and displays</b><span>Choose which apps can take screenshots</span></div><span class="on">On</span><em class="sw on"></em><svg class="chv" width="12" height="12"><use href="#up"/></svg></div>
      <div class="st-card c"><i class="blank"></i><div class="tx"><b>Let desktop apps take screenshots of various windows or displays</b><span>Desktop apps that have previously requested access to take screenshots are listed here</span></div><span class="on">On</span><em class="sw on"></em><i class="chv"></i></div>
      <div class="st-card d"><svg width="21" height="20"><use href="#history"/></svg><div class="tx"><b>Recent activity</b><span>See which apps have requested to take screenshots in the last 7 days</span></div><span class="req">0 requests</span><svg class="chv" width="12" height="12"><use href="#down"/></svg></div>
      <div class="st-card e"><svg width="22" height="21"><use href="#s-priv"/></svg><div class="tx"><b>Privacy resources</b><div class="links"><a>About these settings and your privacy</a><a>Privacy dashboard</a><a>Privacy Statement</a></div></div></div>
      <div class="st-foot"><svg width="16" height="16"><use href="#gethelp"/></svg><a>Get help</a></div>
      <div class="st-foot"><svg width="16" height="16"><use href="#givefb"/></svg><a>Give feedback</a></div>
    </div>
  </div>
</section>

</div>
</body>
</html>
```

FILE: styles.css
```css
* { box-sizing: border-box; margin: 0; padding: 0; }
html, body { width: 3840px; height: 1084px; overflow: hidden; background: #fff; }
body { font-family: "Open Sans", "Noto Sans", sans-serif; font-size: 13px; }
i, em { font-style: normal; }
b { font-weight: 600; }
svg { display: block; flex: none; }
button { font: inherit; border: 0; background: none; color: inherit; }
.defs { position: absolute; }
.desktop { position: relative; width: 3840px; height: 1084px; overflow: hidden; }
.monitor { position: absolute; width: 1920px; height: 1080px; overflow: hidden; display: flex; flex-direction: column; }
.left { left: 0; top: 4px; background: #191a1a; }
.right { left: 1920px; top: 0; background: #262626; }
.window { position: absolute; overflow: hidden; border-radius: 8px; white-space: nowrap; color: #1b1b1b; display: flex; flex-direction: column; }

/* window caption buttons */
.wbtn { display: flex; margin-left: auto; align-self: flex-start; color: #8b8b8b; }
.wbtn i { width: 46px; height: 28px; display: flex; align-items: center; justify-content: center; }

/* Firefox */
.fx-tabs { height: 44px; background: #1f1e25; display: flex; align-items: center; color: #d6d6da; white-space: nowrap; }
.fx-view { width: 43px; height: 44px; border-right: 1px solid #45444d; display: flex; align-items: center; justify-content: center; margin-right: 3.400px; padding-right: 2px; }
.fx-tab { width: 176px; height: 36px; margin-right: 3.700px; padding: 1px 12px 0 8px; border-radius: 4px; display: flex; align-items: center; font-size: 12.400px; letter-spacing: -.6px; flex: none; }
.fx-tab span { flex: 1; overflow: hidden; margin: 0 3px 0 7px; mask-image: linear-gradient(90deg, #000 80%, transparent); }
.fx-tab.active { background: #3b3a45; }
.plexfav { background: #000; color: #44474a; padding: 2px; margin-right: -2px; }
.c42 { width: 41px; display: flex; justify-content: center; }
.fx-win { display: flex; margin-left: auto; }
.fx-win i { width: 46px; display: flex; justify-content: center; }
.fx-nav { height: 40px; background: #2b2a33; display: flex; align-items: center; padding-left: 6px; color: #fbfbfe; }
.c36 { width: 36px; height: 40px; flex: none; display: flex; align-items: center; justify-content: center; position: relative; }
.c36.dim { color: #77767e; }
.c36.first { margin-left: 117px; }
.fx-url { width: 1206px; height: 32px; margin-left: 117px; background: #1c1b22; border-radius: 4px; display: flex; align-items: center; padding: 0 8px; gap: 12px; font-size: 13.700px; color: #8d8c94; }
.fx-url .addr { flex: 1; letter-spacing: -.27px; margin-left: -1px; }
.fx-url b { color: #fbfbfe; font-weight: 400; }
.ava { width: 16px; height: 16px; border-radius: 50%; background: #fff; color: #222; font: 700 10px/16px "Open Sans", sans-serif; text-align: center; }
.bdg { position: absolute; right: 5px; top: 6px; min-width: 16px; height: 11px; border-radius: 2px; color: #fff; font-size: 10px; line-height: 11px; text-align: center; font-weight: 600; }
.bdg.pink { background: #ff3d71; border: 1px solid #fff; line-height: 8px; }
.bdg.gray { background: #737373; }
.bdg.amber { background: #ee8a1e; }
.gdot { position: absolute; bottom: 6px; left: 16px; width: 4px; height: 4px; border-radius: 50%; background: #2ddbb1; }
.ub { width: 14px; height: 15px; background: #8a0b0b; border-radius: 2px 2px 7px 7px; }
.badger { width: 15px; height: 13px; border-radius: 7px 7px 3px 3px; background: linear-gradient(110deg, #fff 30%, #222 32%, #222 45%, #fff 47%, #fff 60%, #ee8a1e 62%); }
.bw { width: 15px; height: 16px; border-radius: 2px; border: 3px solid #175ddc; background: linear-gradient(90deg, #fff 50%, #175ddc 50%); }
.fx-marks { height: 29px; background: #2b2a33; border-bottom: 1px solid #0c0c0d; display: flex; align-items: center; padding: 2px 0 0 12px; color: #fbfbfe; white-space: nowrap; letter-spacing: -.6px; font-size: 12.400px; }
.fx-marks .gs { margin-left: 4px; width: 1468px; }
.fx-marks .mk1 { width: 49px; padding-left: 9px; }
.mki { margin-right: 5px; }
.mkc { margin-left: auto; margin-right: 15px; }
.mkf { margin-right: 4px; }
.fx-marks .ob { margin-right: 12px; }

/* Perplexity page */
.page { flex: 1; min-height: 0; display: flex; font-family: Inter, "Liberation Sans", sans-serif; color: #8d9191; }
.px-side { width: 221px; background: #202222; border-right: 1px solid #2d2f2f; display: flex; flex-direction: column; white-space: nowrap; }
.px-logo { height: 52px; margin: 11px 0 12px 20px; padding-top: 8px; display: flex; align-items: flex-start; gap: 8px; color: #20b8cd; }
.px-logo span { font-size: 26px; line-height: 30px; color: #e8e8e6; letter-spacing: -1.500px; }
.px-new { width: 180px; height: 40px; margin-left: 20px; border: 1px solid #343636; border-radius: 20px; background: #191a1a; line-height: 38px; padding-left: 16px; font-size: 14px; letter-spacing: -.2px; font-weight: 500; margin-bottom: 17px; }
.px-item { height: 44px; display: flex; align-items: center; gap: 5px; padding: 0 0 1px 24px; font-size: 15.500px; letter-spacing: -.4px; font-weight: 500; }
.px-thread { margin: 6px 0 0 34px; border-left: 1px solid #3b3e3e; height: 24px; line-height: 24px; padding-left: 12px; font-size: 13px; letter-spacing: -.3px; }
.px-user { margin-top: auto; height: 57px; border-top: 1px solid #2f3131; display: flex; align-items: center; padding: 2px 12px 0 11px; }
.px-user b { width: 108px; color: #e8e8e6; font-size: 13.800px; letter-spacing: -.3px; }
.px-user svg { margin-right: 20px; }
.px-user svg:last-child { margin: 0; }
.px-ava { width: 34px; height: 34px; margin: -2px 7px 0 0; border: 1px solid #20b8cd; border-radius: 50%; background: #2b2d2d; display: flex; align-items: center; justify-content: center; position: relative; }
.px-ava svg { margin: 0; }
.px-ava em { position: absolute; left: 6px; bottom: -6px; width: 22px; height: 12px; background: #20b8cd; color: #10292d; font-size: 11px; line-height: 10px; text-align: center; border-radius: 2px; }
.px-dl { height: 57px; border-top: 1px solid #2f3131; display: flex; align-items: center; padding: 0 12px 7px 14px; font-size: 14px; }
.px-dl span { margin-left: 7px; width: 126px; }
.px-dl svg:last-child { margin-left: auto; }
.px-main { flex: 1; position: relative; border-right: 1px solid #2d2f2f; margin-right: 8px; }
.px-head { height: 54px; border-bottom: 1px solid #2d2f2f; display: flex; align-items: center; justify-content: flex-end; gap: 17px; padding-right: 16px; font-size: 8px; letter-spacing: -1px; }
.px-head b { height: 32px; width: 77px; background: #20b8cd; color: #14272a; border-radius: 4px; display: flex; align-items: center; gap: 5px; padding-left: 10px; font-size: 14px; letter-spacing: -.2px; font-weight: 500; }
.media { width: 300px; margin-left: 1063px; margin-top: 14px; }
.shot { border-radius: 5px; overflow: hidden; color: #111; background: #eef2fa; font-family: "Open Sans", sans-serif; }
.one { height: 161px; margin-bottom: 8px; padding: 4px 10px 0; border-right: 1px solid #9db9e0; }
.wb { display: flex; gap: 14px; justify-content: flex-end; margin-right: -3px; }
.one h6 { font-size: 11px; line-height: 16px; text-align: right; padding-right: 46px; margin-top: 14px; font-weight: 600; }
.one .cap { font-size: 6.500px; line-height: 8px; text-align: right; padding-right: 24px; margin-top: 5px; margin-bottom: 3px; }
.one .r { height: 32px; background: #fbfcfe; border-radius: 2px; margin-bottom: 2px; display: flex; align-items: center; justify-content: flex-end; font-size: 6.500px; padding-right: 5px; }
.one .r.tall { height: 36px; }
.one .r.last { height: 28px; }
.one .r span { color: #777; margin-right: 17px; }
.one .r .dk { color: #222; margin-right: 8px; }
.one .r b { font-weight: 400; }
.one u { width: 15px; height: 7px; border: 1px solid #777; border-radius: 4px; margin-left: 5px; background: radial-gradient(circle at 3px 50%, #444 2px, transparent 2.300px); }
.one .f { border: 1px solid #222; border-radius: 3px; display: flex; align-items: center; padding: 1px 2px; height: 14px; margin-right: -4px; }
.one u.on { border: 0; background: radial-gradient(circle at 11px 50%, #fff 2px, #0067c0 2.300px); }
.two { height: 86px; background: #f0f0f0; margin-bottom: 8px; padding: 6px 5px 0; border-top: 1px solid #222; }
.two .l { height: 11px; margin-bottom: 1px; font-size: 3.500px; display: flex; align-items: center; justify-content: flex-end; padding-right: 35px; }
.two .l b { padding-right: 5px; }
.two .w { background: #fbfbfb; color: #666; padding-right: 34px; position: relative; }
.two u { position: absolute; right: 3px; width: 6px; height: 3px; border: .5px solid #555; border-radius: 2px; }
.more { height: 85px; border-radius: 5px; background: #202222; padding: 8px; margin-bottom: 101px; }
.mthumbs { display: flex; justify-content: flex-end; gap: 4px; }
.mthumbs span { width: 43px; height: 41px; border-radius: 3px; }
.t1 { background: repeating-linear-gradient(#f1f2f6 0 8px, #dfe1ea 8px 9px); }
.t2 { background: linear-gradient(#a9a9a9 0 3px, transparent 3px 31px, #8f8f8f 31px 38px, #c9c4c2 38px), repeating-linear-gradient(90deg, transparent 0 6px, #555 6px 7px), repeating-linear-gradient(#8d8d8d 0 6px, #565656 6px 7px); display: flex; justify-content: center; padding: 7px 0 0 8px; }
.more p { text-align: right; padding: 10px 59px 0 0; font-size: 13px; }
.dash { height: 42px; border: 1px dashed #323535; border-radius: 5px; display: flex; justify-content: flex-end; align-items: center; padding-right: 19px; color: #1f9cae; margin-bottom: 8px; }
.related { width: 675px; margin-left: 327px; margin-top: 113px; color: #e8e8e6; font-size: 15.900px; font-weight: 500; white-space: nowrap; }
.related div { height: 41px; border-top: 1px solid #2d2f2f; display: flex; align-items: center; justify-content: space-between; padding-right: 4px; }
.related svg { color: #20a9bc; }
.ask { position: absolute; left: 327px; top: 805px; width: 675px; height: 74px; border-radius: 37px; background: #202222; padding: 8px; }
.ask-in { height: 58px; border: 1px solid #454848; border-radius: 29px; display: flex; align-items: center; padding: 0 8px 0 17px; font-size: 15.500px; }
.ask-in span { margin-left: 18px; flex: 1; }
.ask-in b { color: #20b8cd; font-weight: 500; font-size: 14px; margin: 0 17px 0 8px; }
.tg { width: 39px; height: 24px; border: 1px solid #3b3e3e; border-radius: 12px; background: radial-gradient(circle at 26px 50%, #20b8cd 7.500px, transparent 8.200px); }
.send { width: 32px; height: 32px; border-radius: 50%; background: #2e2f2f; display: flex; align-items: center; justify-content: center; color: #6b6e6e; }
.qm { position: absolute; right: 14px; bottom: 24px; width: 33px; height: 33px; border-radius: 50%; background: #e8e8e6; color: #13343b; font-weight: 600; font-size: 15px; line-height: 33px; text-align: center; }

/* taskbars */
.taskbar { height: 48px; flex: none; border-top: 1px solid #41484f; display: flex; align-items: center; color: #fff; }
.tb-left { background: linear-gradient(90deg, #1b2733, #1a2733 20%, #132a3b 30%, #1b262e 42%, #222326 50%, #222427 62%, #1c2935 75%, #12263f 95%); }
.tb-right { background: linear-gradient(90deg, #1b242e, #1b2730 22%, #132a3d 33%, #20262b 50%, #1d2429 75%, #182733 88%, #12263f 97%); }
.start { margin: 0 14px 0 21px; }
.tb-search { width: 218px; height: 30px; border-radius: 15px; background: #f1f3f4; display: flex; align-items: center; padding: 0 5px 0 10px; color: #222; font-size: 13.300px; margin-right: 3px; }
.tb-search span { flex: 1; margin-left: 11px; color: #5c5f62; }
.app { width: 40px; height: 40px; margin-right: 4px; display: flex; align-items: center; justify-content: center; position: relative; border-radius: 4px; }
.app.run::after { content: ""; position: absolute; bottom: 1px; left: 17px; width: 6px; height: 3px; border-radius: 2px; background: #999ea3; }
.app.cur { background: #25333f; border: 1px solid #2f3d49; }
.app.cur::after { width: 15px; left: 12px; background: #1493ff; bottom: 0; }
.dc { width: 24px; height: 24px; border-radius: 50%; background: #5865f2; display: flex; align-items: center; justify-content: center; }
.nine { position: absolute; right: 3px; top: 3px; width: 14px; height: 14px; border-radius: 50%; background: #e8494f; font-size: 9.500px; line-height: 14px; text-align: center; letter-spacing: -.5px; }
.tray { margin-left: auto; display: flex; align-items: center; gap: 8px; padding-right: 20px; }
.tray > svg:first-child { margin-right: 10px; }
.clock { display: flex; flex-direction: column; align-items: flex-end; font-size: 11.300px; line-height: 16px; letter-spacing: -.1px; margin-left: 12px; }
.tb-right .tray { padding-right: 23px; }

/* PowerToys */
.pt-win { left: 86px; top: 83px; width: 1424px; height: 750px; background: #f3f3f3; box-shadow: 0 0 0 1px #3b3b3b55, 0 18px 44px rgba(0,0,0,.55); }
.pt-title { height: 49px; margin-bottom: 7px; display: flex; align-items: center; padding-left: 16px; gap: 16px; font-size: 11.200px; color: #333; flex: none; }
.pt-body { display: flex; flex: 1; }
.pt-nav { width: 316px; padding-left: 4px; position: relative; margin-top: -1px; }
.pt-nav a { height: 36px; margin-bottom: 4px; display: flex; align-items: center; gap: 15px; padding: 0 0 1px 12px; border-radius: 4px; font-size: 13.100px; position: relative; }
.pt-nav a:first-child { margin-top: 2px; }
.pt-nav .gapb { margin-bottom: 12px; }
.pt-nav .sel { background: #eaeaea; }
.pt-nav .sel::before { content: ""; position: absolute; left: 0; top: 10px; width: 3px; height: 16px; border-radius: 2px; background: #0067c0; }
.sbar { position: absolute; right: 0; top: 59px; width: 2px; height: 301px; background: #8a8a8a; border-radius: 1px; }
.pt-main { width: 999px; margin-left: 57px; }
.pt-main h1 { font-size: 26.700px; font-weight: 600; line-height: 36px; margin: -5px 0 24px 8px; letter-spacing: -.1px; }
.pt-banner { display: flex; gap: 16px; height: 106px; margin-bottom: 52px; color: #5f5f5f; font-size: 13.400px; line-height: 20px; }
.pic { width: 160px; height: 106px; border-radius: 4px; overflow: hidden; background: linear-gradient(#6397c9, #7fb3dc 50%, #a9cdea 91%, #c9825f 92%); padding: 6px 20px 6px 19px; }
.mini { height: 94px; background: #e9ebee; border-radius: 2px; padding-left: 7px; box-shadow: 0 2px 6px #0005; }
.mini span { display: block; height: 7px; margin-left: -7px; background: #f8f8f8; }
.mini b { display: block; font-size: 3.500px; line-height: 6px; }
.mini i { display: block; width: 17px; height: 11px; border: 2px solid #7da9d6; margin-top: 1px; }
.pt-main h2 { font-size: 13px; font-weight: 600; line-height: 20px; margin: 33px 0 8px 1px; }
.pt-main .h2b { margin: 34px 0 7px 1px; }
.pt-card { height: 68px; border: 1px solid #e3e3e3; border-radius: 4px; background: #fbfbfb; display: flex; align-items: center; justify-content: space-between; padding: 0 15px 0 18px; }
.pt-card.c1 { height: 69px; }
.sw { width: 40px; height: 20px; border-radius: 10px; background: radial-gradient(circle at 30px 50%, #fff 6px, transparent 6.600px) #0067c0; flex: none; }

/* remap dialog */
.dlg { left: 488px; top: 221px; width: 944px; height: 591px; background: linear-gradient(125deg, #eff4f6, #f2f3f6 35%, #eef3f9 60%, #eef3fc); box-shadow: 0 0 0 1px #999, 0 12px 40px 6px rgba(0,0,0,.36); }
.dlg .wbtn { color: #111; }
.dlg .wbtn i { width: 45.500px; }
.dlg .dis { color: #b5b8ba; }
.dlg-head { height: 54px; display: flex; align-items: center; gap: 10px; padding: 2px 10px 0 10px; }
.dlg-head h1 { flex: 1; font-size: 27.600px; font-weight: 400; padding-top: 13px; line-height: 36px; }
.btn { width: 100px; height: 32px; border-radius: 4px; background: #fdfdfe; border: 1px solid #e0e2e4; border-bottom-color: #c9cbcd; font-size: 13px; }
.pri { background: #0067c0; color: #fff; border-color: #1470c2; border-bottom-color: #003e73; }
.lead, .eg { padding-left: 10px; line-height: 20px; }
.lead { margin-top: 28px; font-weight: 600; font-size: 13.250px; }
.eg { margin-top: 10px; font-style: italic; font-size: 13.600px; letter-spacing: .12px; }
.cols { display: flex; margin: 18px 0 9px 10px; line-height: 20px; }
.cols b { width: 290px; font-weight: 700; font-size: 12.700px; }
.maprow { height: 106px; background: #fcfcfe; border: solid #dfe2e6; border-width: 1px 0; display: flex; align-items: center; padding: 0 15px 0 10px; }
.stack { width: 160px; display: flex; flex-direction: column; gap: 9px; align-self: flex-start; padding-top: 15px; }
.stack.last { margin-left: 10px; }
.fld { height: 33px; border: 1px solid #e8e9eb; border-bottom-color: #cfd1d3; border-radius: 4px; background: #fff; display: flex; align-items: center; justify-content: space-between; padding: 0 15px 0 11px; font-size: 13px; }
.fld.mid { justify-content: center; padding: 0; }
.fld svg { color: #555; margin-left: auto; }
.fld.soft { background: #fafafc; }
.arr { margin: 0 55px 0 65px; }
.del { width: 44px; height: 33px; margin-left: auto; border: 1px solid #e6e7e9; border-bottom-color: #d0d2d4; border-radius: 4px; background: #fdfdfe; display: flex; align-items: center; justify-content: center; }
.add { width: 176px; height: 33px; margin: 12px 0 0 10px; background: #0067c0; border-bottom: 1px solid #003e73; color: #fff; border-radius: 4px; display: flex; align-items: center; gap: 12px; padding-left: 12px; font-size: 13.300px; flex: none; }

/* Obsidian */
.obs { flex: 1; min-height: 0; display: flex; color: #9a9a9a; white-space: nowrap; font-size: 12.400px; }
.ribbon { width: 44px; display: flex; flex-direction: column; background: #212121; }
.ribbon > i { height: 40px; border-bottom: 1px solid #363636; background: #262626; }
.ribbon i { display: flex; align-items: center; justify-content: center; flex: none; }
.rib-in { flex: 1; display: flex; flex-direction: column; border-right: 1px solid #363636; padding: 5px 0 9px; }
.rib-in i { height: 32px; }
.rib-in .push { margin-top: auto; }
.o-side { width: 300px; border-right: 1px solid #363636; display: flex; flex-direction: column; }
.o-tabs { height: 40px; border-bottom: 1px solid #363636; display: flex; align-items: center; padding-left: 8px; gap: 3px; }
.o-tabs i { width: 34px; height: 25px; display: flex; align-items: center; justify-content: center; border-radius: 4px; }
.o-tabs .on, .or-head .on, .or-tabs .on { background: #303030; color: #dadada; }
.o-body { flex: 1; background: #212121; padding: 0 11px 0 12px; }
.o-tools { height: 42px; display: flex; align-items: center; gap: 15px; padding-left: 3px; margin-bottom: 3px; }
.o-body b { display: block; height: 24px; line-height: 22px; padding-left: 24px; letter-spacing: -.25px; font-size: 12px; font-weight: 500; }
.o-body a { display: block; height: 25px; line-height: 25px; margin-bottom: 2px; padding-left: 24px; border-radius: 4px; font-size: 12.500px; letter-spacing: -.04px; }
.o-body .on { background: #2f2f2f; color: #dadada; }
.o-main { width: 1276px; display: flex; flex-direction: column; }
.o-head { height: 40px; border-bottom: 1px solid #363636; display: flex; align-items: center; padding: 0 14px 0 19px; }
.o-head .t { width: 191px; line-height: 22px; padding-top: 4px; }
.o-head .sep { border-left: 1px solid #444; padding: 0 0 0 8px; margin-top: 4px; width: 199px; height: 20px; line-height: 20px; }
.o-head .on { width: 202px; height: 34px; align-self: flex-end; margin-bottom: -1px; border: 1px solid #363636; border-bottom-color: #262626; border-radius: 7px 7px 0 0; padding: 0 11px 0 9px; color: #dadada; display: flex; align-items: center; justify-content: space-between; }
.pl { margin: 2px 0 0 12px; }
.hd { margin-left: auto; margin-right: 17px; }
.o-nav { height: 38px; display: flex; align-items: center; padding: 0 20px; gap: 17px; color: #5a5a5a; }
.o-nav .bk { margin-left: auto; margin-right: -5px; }
.o-nav .bk, .o-nav .bk + svg { color: #999; }
.o-right { flex: 1; border-left: 1px solid #363636; display: flex; flex-direction: column; }
.or-head { height: 40px; border-bottom: 1px solid #363636; display: flex; align-items: center; padding-left: 8px; gap: 3px; }
.or-head i { width: 34px; height: 25px; display: flex; align-items: center; justify-content: center; border-radius: 4px; flex: none; }
.or-head .li { width: 28px; }
.or-head .wn { width: 39px; }
.or-head .wn:nth-child(6) { width: 17px; }
.or-head .wn:nth-child(7) { margin-left: 11px; }
.graph { height: 476px; border-bottom: 1px solid #363636; display: flex; flex-direction: column; align-items: center; }
.gg { align-self: flex-end; margin: 24px 25px 0 0; }
.graph em { width: 34px; height: 34px; border-radius: 50%; background: #999; margin: 183px 4px 0 0; flex: none; }
.graph p { text-align: center; font-size: 16.800px; line-height: 21px; color: #dadada; margin: 5px 0 0 -4px; }
.or-tabs { height: 41px; display: flex; align-items: center; padding-left: 8px; gap: 3px; }
.or-tabs i { width: 34px; height: 25px; display: flex; align-items: center; justify-content: center; border-radius: 4px; }
.month { height: 42px; display: flex; align-items: center; padding: 3px 20px 0 20px; }
.month b { font-weight: 400; font-size: 14px; letter-spacing: -.1px; color: #dadada; flex: 1; }
.month span { font-size: 11.500px; font-weight: 600; margin: 0 17px; letter-spacing: -.1px; }
.month i { font-size: 11px; color: #5d5d5d; }
.calgrid { display: grid; grid-template-columns: 39px 43px 38px 38px 40px 33px 39px; padding-left: 15px; text-align: center; grid-auto-rows: 33px; line-height: 33px; color: #dadada; font-size: 13px; }
.calgrid i { color: #555; }
.wk { grid-auto-rows: 17px; line-height: 17px; }
.wk b { font-size: 10px; letter-spacing: .9px; color: #9a9a9a; }
.today { color: #7d8796; font-weight: 600; }
.status { margin-top: auto; height: 22px; display: flex; align-items: center; justify-content: flex-end; gap: 8px; padding-right: 8px; font-size: 10.500px; color: #606060; letter-spacing: -.1px; }
.status svg { margin: 0 3px 0 5px; }

/* Settings */
.st-win { left: 2331px; top: 82px; width: 1022px; height: 733px; background: #f3f3f3; box-shadow: 0 0 0 1px #4445, 0 14px 40px rgba(0,0,0,.5); }
.st-title { height: 49px; display: flex; align-items: center; padding: 0 0 1px 17px; gap: 20px; font-size: 11.300px; flex: none; color: #222; }
.st-title .wbtn i { height: 32px; }
.st-body { display: flex; }
.st-left { width: 296px; padding-left: 16px; }
.st-user { height: 60px; margin-top: 8px; display: flex; align-items: center; gap: 12px; }
.st-user em { width: 60px; height: 60px; border-radius: 50%; background: #e6e6e6; display: flex; align-items: center; justify-content: center; }
.st-user b { display: block; font-size: 12.900px; line-height: 19px; }
.st-user span { display: block; font-size: 11.600px; line-height: 16px; }
.st-search { height: 32px; margin: 24px 0 22px; border: 1px solid #e2e2e2; border-bottom-color: #868686; border-radius: 4px; background: #fbfbfb; display: flex; align-items: center; justify-content: space-between; padding: 0 13px 0 10px; color: #666; font-size: 13px; }
.st-left nav a { height: 36px; margin-bottom: 4px; display: flex; align-items: center; gap: 14px; padding: 0 0 0 10px; border-radius: 4px; position: relative; font-size: 13.200px; }
.st-left .sel { background: #eaeaea; }
.st-left .sel::before { content: ""; position: absolute; left: 0; top: 10px; width: 3px; height: 16px; border-radius: 2px; background: #0067c0; }
.st-main { width: 671px; margin-left: 30px; }
.st-main h1 { margin: 7px 0 19px -3px; height: 36px; display: flex; align-items: center; font-size: 26.500px; letter-spacing: -.1px; }
.st-main h1 span { font-weight: 600; color: #5f5f5f; }
.st-main h1 svg { margin: 0 16px 0 17px; }
.st-card { border: 1px solid #e5e5e5; border-radius: 4px; background: #fbfbfb; display: flex; align-items: center; padding: 0 15px 0 19px; margin-bottom: 4px; color: #1b1b1b; }
.st-card .tx { flex: 1; margin-left: 19px; }
.st-card .blank { width: 20px; }
.tx b { display: block; font-weight: 400; font-size: 13.230px; line-height: 18px; }
.tx span { display: block; font-size: 11.600px; line-height: 16px; color: #5f5f5f; }
.st-card .on { font-size: 13px; }
.st-card em.sw { margin-left: 13px; }
.chv { width: 12px; height: 12px; margin-left: 14px; margin-right: 2px; }
.req { color: #5f5f5f; font-size: 13.200px; }
.a { height: 80px; }
.b { height: 70px; margin-bottom: 0; border-radius: 4px 4px 0 0; }
.c { height: 67px; border-top: 0; border-radius: 0 0 4px 4px; }
.d { height: 68px; }
.b .tx { padding-top: 1px; }
.c .tx, .d .tx { padding-top: 4px; }
.e { height: 69px; margin-bottom: 27px; }
.st-card.e > svg { margin-left: -1px; }
.links { display: flex; font-size: 13.180px; }
.links a, .st-foot a { color: #0e5fa8; }
.links a { line-height: 15px; margin-top: 3px; }
.links a + a { margin-left: 5px; padding-left: 6px; border-left: 1px solid #444; }
.st-foot { height: 33px; display: flex; align-items: center; gap: 17px; font-size: 13px; }
```
